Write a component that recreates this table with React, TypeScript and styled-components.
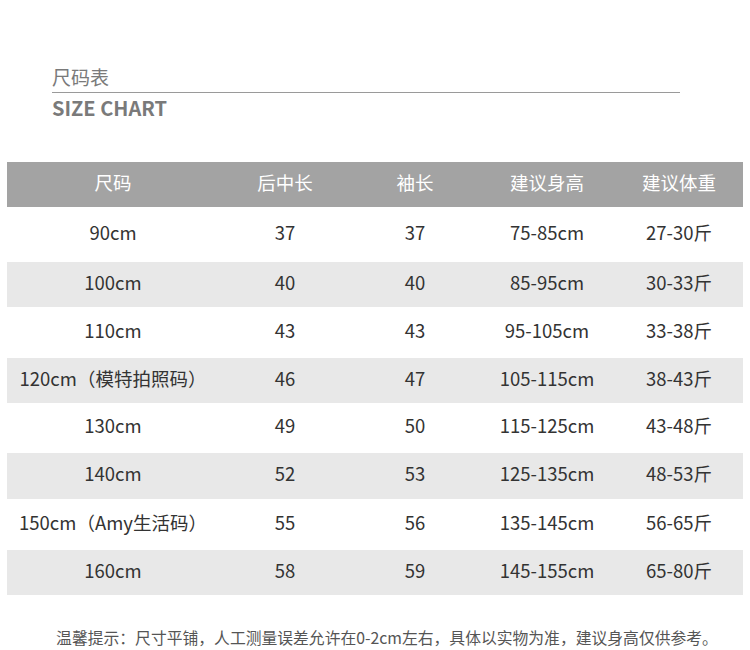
import React from 'react';
import styled, { createGlobalStyle } from 'styled-components';

const GlobalStyle = createGlobalStyle`
  body {
    margin: 0;
    background: #fff;
    font-family: "Noto Sans CJK SC", "Noto Sans", sans-serif;
  }
`;

const Page = styled.div`
  width: 750px;
  height: 650px;
  padding-top: 63px;
  box-sizing: border-box;
`;

const Heading = styled.div`
  margin: 0 70px 0 52px;
  color: #7a7a7a;
`;

const TitleCn = styled.div`
  font-size: 19px;
  line-height: 27px;
  padding-bottom: 2px;
  border-bottom: 1px solid #9a9a9a;
`;

const TitleEn = styled.div`
  font-size: 20px;
  font-weight: 700;
  line-height: 28px;
  margin-top: 1px;
`;

const Table = styled.div`
  margin: 40px 7px 0 7px;
`;

const Row = styled.div<{ $h: number; $bg: string }>`
  display: grid;
  grid-template-columns: 212px 132px 128px 136px 1fr;
  align-items: center;
  height: ${(p) => p.$h}px;
  background: ${(p) => p.$bg};
`;

const Cell = styled.div<{ $head?: boolean }>`
  text-align: center;
  font-size: 18.5px;
  line-height: 24px;
  padding-bottom: ${(p) => (p.$head ? 5 : 6)}px;
  color: ${(p) => (p.$head ? '#fff' : '#333')};
  white-space: nowrap;
`;

const Note = styled.div`
  margin-top: 31px;
  text-align: center;
  font-size: 15.8px;
  color: #555;
  padding-left: 24px;
  white-space: nowrap;
`;

const head = ['尺码', '后中长', '袖长', '建议身高', '建议体重'];

const rows = [
  ['90cm', '37', '37', '75-85cm', '27-30斤'],
  ['100cm', '40', '40', '85-95cm', '30-33斤'],
  ['110cm', '43', '43', '95-105cm', '33-38斤'],
  ['120cm（模特拍照码）', '46', '47', '105-115cm', '38-43斤'],
  ['130cm', '49', '50', '115-125cm', '43-48斤'],
  ['140cm', '52', '53', '125-135cm', '48-53斤'],
  ['150cm（Amy生活码）', '55', '56', '135-145cm', '56-65斤'],
  ['160cm', '58', '59', '145-155cm', '65-80斤'],
];

const heights = [55, 45, 51, 45, 50, 46, 51, 45];

export default function App() {
  return (
    <Page>
      <GlobalStyle />
      <Heading>
        <TitleCn>尺码表</TitleCn>
        <TitleEn>SIZE CHART</TitleEn>
      </Heading>
      <Table>
        <Row $h={45} $bg="#a3a3a3">
          {head.map((h) => (
            <Cell key={h} $head>{h}</Cell>
          ))}
        </Row>
        {rows.map((r, i) => (
          <Row key={r[0]} $h={heights[i]} $bg={i % 2 ? '#e8e8e8' : '#fff'}>
            {r.map((c, j) => (
              <Cell key={j}>{c}</Cell>
            ))}
          </Row>
        ))}
      </Table>
      <Note>温馨提示：尺寸平铺，人工测量误差允许在0-2cm左右，具体以实物为准，建议身高仅供参考。</Note>
    </Page>
  );
}
